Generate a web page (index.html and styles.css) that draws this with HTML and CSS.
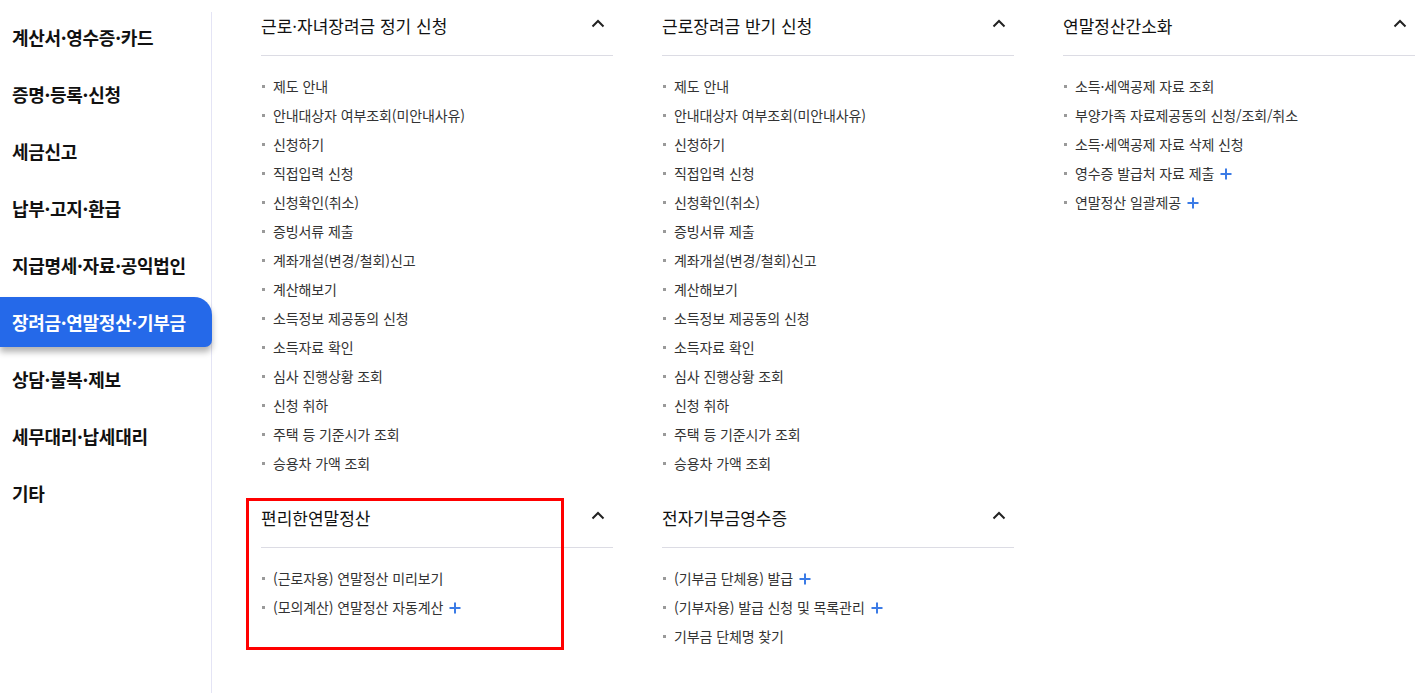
FILE: index.html
```html
<!DOCTYPE html>
<html lang="ko">
<head>
    <meta charset="UTF-8">
    <meta name="viewport" content="width=device-width, initial-scale=1.0">
    <title>장려금·연말정산·기부금</title>
    <link rel="stylesheet" href="styles.css">
</head>
<body>
    <div class="page">
        <ul class="side">
            <li>계산서·영수증·카드</li>
            <li>증명·등록·신청</li>
            <li>세금신고</li>
            <li>납부·고지·환급</li>
            <li>지급명세·자료·공익법인</li>
            <li class="on">장려금·연말정산·기부금</li>
            <li>상담·불복·제보</li>
            <li>세무대리·납세대리</li>
            <li>기타</li>
        </ul>

        <div class="menus">
            <div class="sec">
                <div class="head">
                    <h3>근로·자녀장려금 정기 신청</h3>
                    <svg class="chev" width="14" height="9" viewBox="0 0 14 9"><polyline points="1.5,7.5 7,2 12.5,7.5" fill="none" stroke="#222" stroke-width="2"/></svg>
                </div>
                <ul class="list">
                    <li>제도 안내</li>
                    <li>안내대상자 여부조회(미안내사유)</li>
                    <li>신청하기</li>
                    <li>직접입력 신청</li>
                    <li>신청확인(취소)</li>
                    <li>증빙서류 제출</li>
                    <li>계좌개설(변경/철회)신고</li>
                    <li>계산해보기</li>
                    <li>소득정보 제공동의 신청</li>
                    <li>소득자료 확인</li>
                    <li>심사 진행상황 조회</li>
                    <li>신청 취하</li>
                    <li>주택 등 기준시가 조회</li>
                    <li>승용차 가액 조회</li>
                </ul>
            </div>

            <div class="sec">
                <div class="head">
                    <h3>근로장려금 반기 신청</h3>
                    <svg class="chev" width="14" height="9" viewBox="0 0 14 9"><polyline points="1.5,7.5 7,2 12.5,7.5" fill="none" stroke="#222" stroke-width="2"/></svg>
                </div>
                <ul class="list">
                    <li>제도 안내</li>
                    <li>안내대상자 여부조회(미안내사유)</li>
                    <li>신청하기</li>
                    <li>직접입력 신청</li>
                    <li>신청확인(취소)</li>
                    <li>증빙서류 제출</li>
                    <li>계좌개설(변경/철회)신고</li>
                    <li>계산해보기</li>
                    <li>소득정보 제공동의 신청</li>
                    <li>소득자료 확인</li>
                    <li>심사 진행상황 조회</li>
                    <li>신청 취하</li>
                    <li>주택 등 기준시가 조회</li>
                    <li>승용차 가액 조회</li>
                </ul>
            </div>

            <div class="sec">
                <div class="head">
                    <h3>연말정산간소화</h3>
                    <svg class="chev" width="14" height="9" viewBox="0 0 14 9"><polyline points="1.5,7.5 7,2 12.5,7.5" fill="none" stroke="#222" stroke-width="2"/></svg>
                </div>
                <ul class="list">
                    <li>소득·세액공제 자료 조회</li>
                    <li>부양가족 자료제공동의 신청/조회/취소</li>
                    <li>소득·세액공제 자료 삭제 신청</li>
                    <li>영수증 발급처 자료 제출 <svg class="plus" width="12" height="12" viewBox="0 0 12 12"><path d="M6 0.5v11M0.5 6h11" stroke="#3b7be6" stroke-width="2"/></svg></li>
                    <li>연말정산 일괄제공 <svg class="plus" width="12" height="12" viewBox="0 0 12 12"><path d="M6 0.5v11M0.5 6h11" stroke="#3b7be6" stroke-width="2"/></svg></li>
                </ul>
            </div>

            <div class="sec">
                <div class="head">
                    <h3>편리한연말정산</h3>
                    <svg class="chev" width="14" height="9" viewBox="0 0 14 9"><polyline points="1.5,7.5 7,2 12.5,7.5" fill="none" stroke="#222" stroke-width="2"/></svg>
                </div>
                <ul class="list">
                    <li>(근로자용) 연말정산 미리보기</li>
                    <li>(모의계산) 연말정산 자동계산 <svg class="plus" width="12" height="12" viewBox="0 0 12 12"><path d="M6 0.5v11M0.5 6h11" stroke="#3b7be6" stroke-width="2"/></svg></li>
                </ul>
                <div class="mark"></div>
            </div>

            <div class="sec">
                <div class="head">
                    <h3>전자기부금영수증</h3>
                    <svg class="chev" width="14" height="9" viewBox="0 0 14 9"><polyline points="1.5,7.5 7,2 12.5,7.5" fill="none" stroke="#222" stroke-width="2"/></svg>
                </div>
                <ul class="list">
                    <li>(기부금 단체용) 발급 <svg class="plus" width="12" height="12" viewBox="0 0 12 12"><path d="M6 0.5v11M0.5 6h11" stroke="#3b7be6" stroke-width="2"/></svg></li>
                    <li>(기부자용) 발급 신청 및 목록관리 <svg class="plus" width="12" height="12" viewBox="0 0 12 12"><path d="M6 0.5v11M0.5 6h11" stroke="#3b7be6" stroke-width="2"/></svg></li>
                    <li>기부금 단체명 찾기</li>
                </ul>
            </div>
        </div>
    </div>
</body>
</html>
```

FILE: styles.css
```css
body {
    margin: 0;
    background: #fff;
    font-family: "Noto Sans CJK KR", "Noto Sans", sans-serif;
    color: #222;
}
ul {
    list-style: none;
    margin: 0;
    padding: 0;
}
.page {
    display: flex;
    align-items: flex-start;
}
.side {
    width: 211px;
    margin-top: 12px;
    min-height: 681px;
    border-right: 1px solid #e4e4f5;
    display: flex;
    flex-direction: column;
    gap: 7px;
}
.side li {
    height: 50px;
    line-height: 50px;
    padding-left: 12px;
    font-size: 18px;
    font-weight: 700;
    color: #111;
    letter-spacing: -0.3px;
    white-space: nowrap;
}
.side li.on {
    background: #2569e9;
    color: #fff;
    border-radius: 0 18px 7px 0;
    box-shadow: 0 5px 6px rgba(0,0,0,0.3);
    margin-right: -1px;
}
.menus {
    display: grid;
    grid-template-columns: repeat(3, 352px);
    column-gap: 49px;
    padding-left: 49px;
}
.sec {
    position: relative;
}
.head {
    height: 55px;
    border-bottom: 1px solid #dcdce4;
    display: flex;
    justify-content: space-between;
    align-items: flex-start;
}
.head h3 {
    margin: 14px 0 0;
    font-size: 17px;
    line-height: 24px;
    font-weight: 400;
    color: #111;
}
.chev {
    margin: 19px 8px 0 0;
}
.list {
    padding: 16px 0 14px;
}
.list li {
    height: 29px;
    line-height: 29px;
    font-size: 14px;
    color: #333;
    display: flex;
    align-items: center;
    letter-spacing: -0.1px;
    white-space: nowrap;
}
.list li::before {
    content: "";
    width: 3px;
    height: 3px;
    background: #9a9a9a;
    margin: 0 8px 0 1px;
}
.plus {
    margin-left: 6px;
}
.mark {
    position: absolute;
    left: -15px;
    top: 6px;
    width: 312px;
    height: 146px;
    border: 3px solid #f00;
}
```
